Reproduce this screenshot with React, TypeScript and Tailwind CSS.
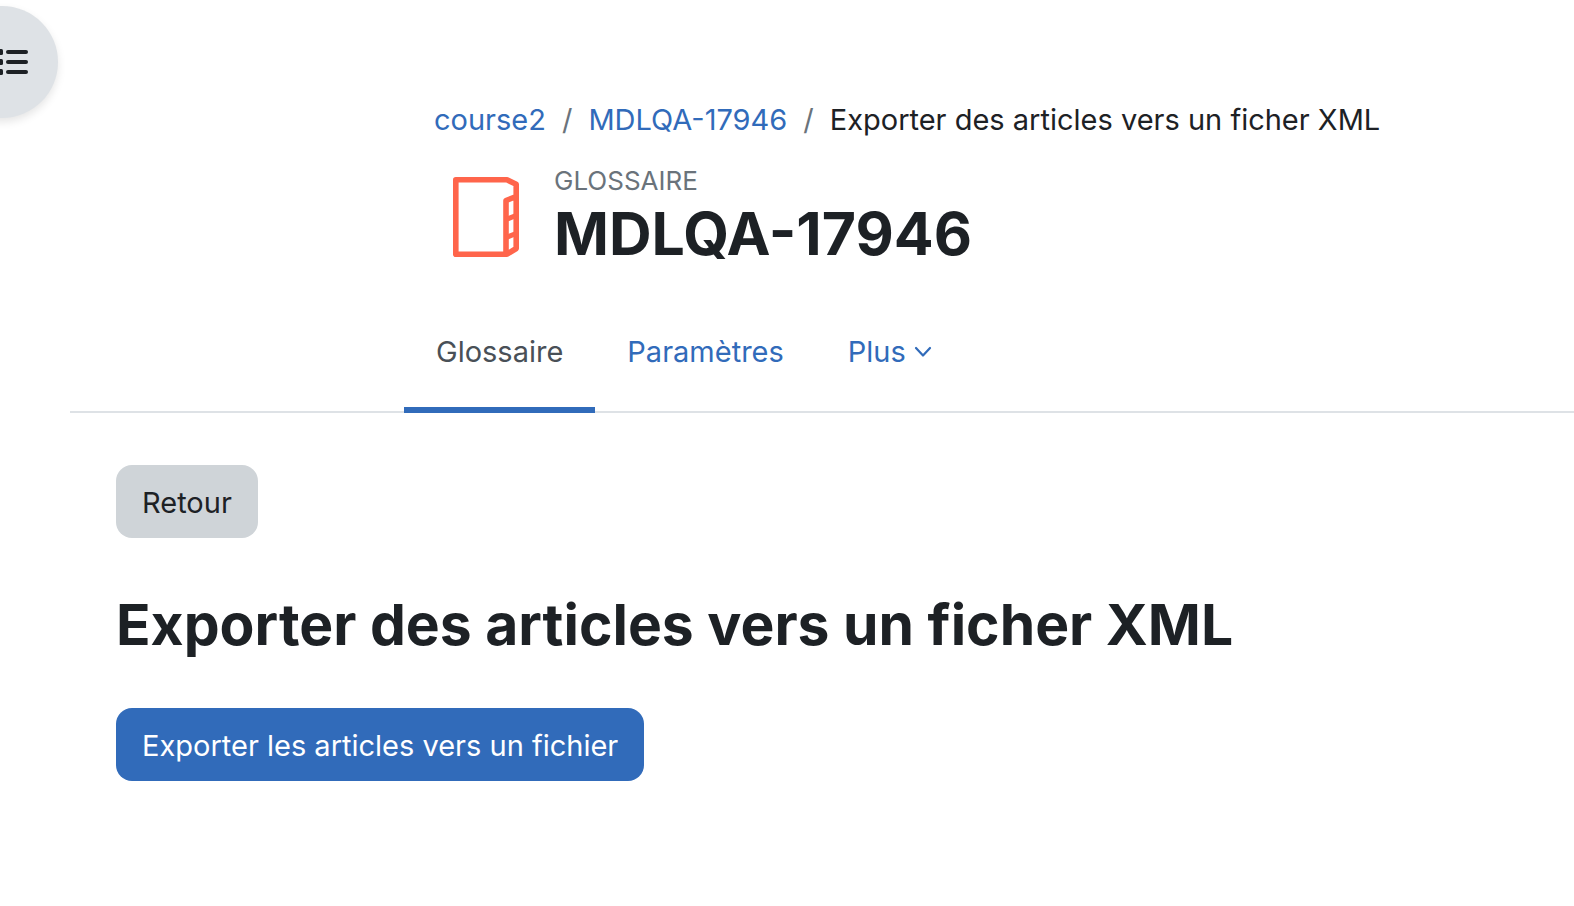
import type { ReactNode } from 'react';

const crumbs = [
  { label: 'course2', href: '#course' },
  { label: 'MDLQA-17946', href: '#glossary' },
];

function DrawerToggle() {
  return (
    <button
      type="button"
      aria-label="Ouvrir l'index du cours"
      className="absolute -left-[54px] top-1.5 h-28 w-28 rounded-full bg-[#dee2e6] shadow-[0_4px_8px_rgba(0,0,0,0.1)]"
    >
      <svg viewBox="0 0 36 28" className="ml-[48px] h-7 w-9" fill="#1d2125" aria-hidden="true">
        {[2, 12, 22].map((y) => (
          <g key={y}>
            <rect x="3" y={y - 1} width="6" height="6" rx="1.5" />
            <rect x="12" y={y} width="22" height="4" rx="2" />
          </g>
        ))}
      </svg>
    </button>
  );
}

function GlossaryIcon() {
  return (
    <svg viewBox="0 0 66 80" className="mt-3 h-20 w-[66px]" fill="none" stroke="#ff654b" aria-hidden="true">
      <path
        d="M2.8 2.8H54L63.2 7.3V71.5L54 77.2H2.8Z M53 77V23.5L63 19.5"
        strokeWidth="5.6"
        strokeLinejoin="round"
      />
      <path d="M53 42.5L63 38.5M53 60.5L63 56.5" strokeWidth="5" />
    </svg>
  );
}

function Tab({ href, active, children }: { href: string; active?: boolean; children: ReactNode }) {
  return (
    <a
      href={href}
      aria-current={active ? 'page' : undefined}
      className={
        active
          ? 'border-b-6 border-[#316bba] px-8 pt-8 pb-[33px] text-[#495057]'
          : 'flex items-center border-b-6 border-transparent px-8 pt-8 pb-[33px] text-[#316bba]'
      }
    >
      {children}
    </a>
  );
}

export default function App() {
  return (
    <div className="relative min-h-screen overflow-hidden bg-white pl-[70px] font-['Inter',sans-serif] text-[29px] leading-[45px] text-[#1d2125]">
      <DrawerToggle />

      <header className="pt-[97px] pl-[364px]">
        <nav aria-label="Fil d'Ariane">
          <ol className="flex whitespace-nowrap">
            {crumbs.map((crumb) => (
              <li key={crumb.label} className="flex">
                <a href={crumb.href} className="text-[#316bba]">
                  {crumb.label}
                </a>
                <span className="px-4 text-[#6a737b]">/</span>
              </li>
            ))}
            <li aria-current="page">Exporter des articles vers un ficher XML</li>
          </ol>
        </nav>
        <div className="mt-[23px] flex items-start gap-[35px] pl-[19px]">
          <GlossaryIcon />
          <div>
            <div className="text-[26px] leading-8 text-[#6a737b] uppercase">Glossaire</div>
            <h1 className="text-[59px] leading-[74px] font-bold">MDLQA-17946</h1>
          </div>
        </div>
      </header>

      <nav
        aria-label="Navigation secondaire"
        className="mt-[26px] flex pl-[334px] shadow-[inset_0_-2px_0_#dee2e6]"
      >
        <Tab href="#glossaire" active>
          Glossaire
        </Tab>
        <Tab href="#parametres">Paramètres</Tab>
        <Tab href="#plus">
          Plus
          <svg viewBox="0 0 18 12" className="ml-2 h-3 w-[18px]" fill="none" aria-hidden="true">
            <path
              d="M2 2L9 9.5L16 2"
              stroke="currentColor"
              strokeWidth="2.2"
              strokeLinecap="round"
              strokeLinejoin="round"
            />
          </svg>
        </Tab>
      </nav>

      <main className="flex flex-col items-start px-[46px] pt-[52px]">
        <button type="button" className="rounded-2xl bg-[#cfd4d8] px-[26px] pt-[15px] pb-[13px]">
          Retour
        </button>
        <h2 className="mt-[51px] text-[57px] leading-[72px] font-bold">
          Exporter des articles vers un ficher XML
        </h2>
        <button type="button" className="mt-[47px] rounded-2xl bg-[#316bba] px-[26px] pt-[15px] pb-[13px] text-white">
          Exporter les articles vers un fichier
        </button>
      </main>
    </div>
  );
}
